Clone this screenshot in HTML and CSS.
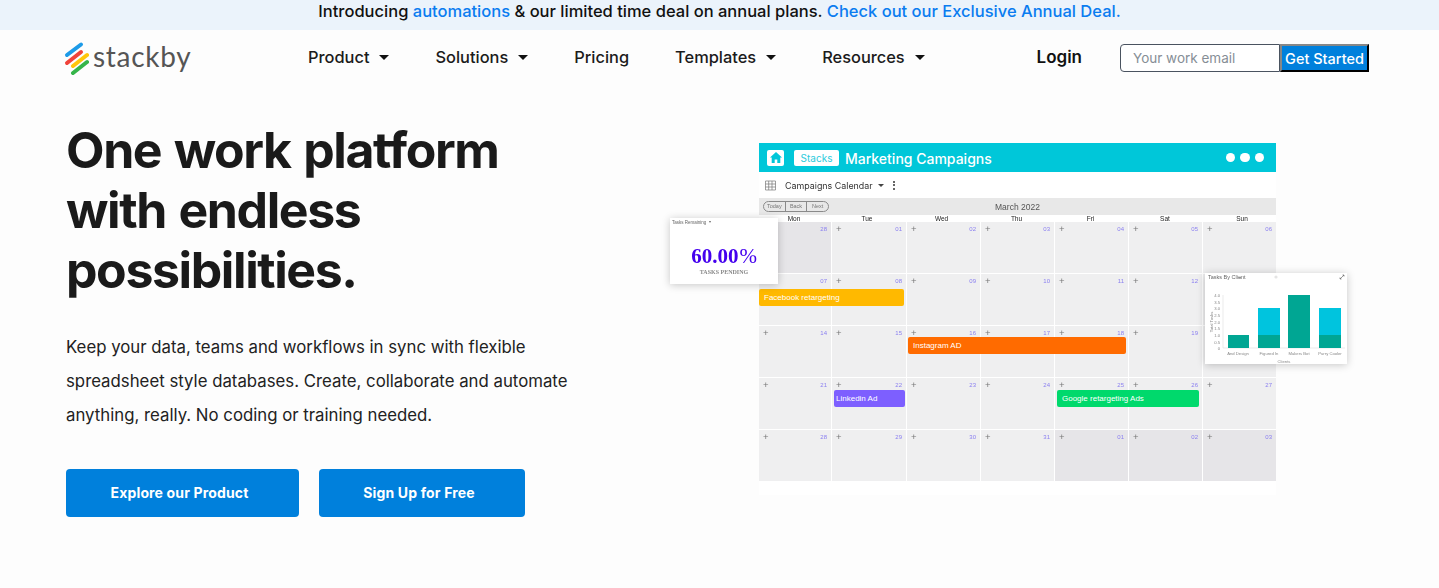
FILE: index.html
```html
<!DOCTYPE html>
<html lang="en">
<head>
	<meta charset="UTF-8">
	<title>Stackby</title>
	<link rel="stylesheet" href="styles.css">
</head>
<body>
	<div class="promo">Introducing <a href="#">automations</a> &amp; our limited time deal on annual plans. <a href="#">Check out our Exclusive Annual Deal.</a></div>

	<header class="nav">
		<a class="logo" href="#">
			<svg width="26" height="36" viewBox="0 0 26 36">
				<path d="M4 15L18 4.500" stroke="#1e9be8"/>
				<path d="M4 23L18 12" stroke="#f0433a"/>
				<path d="M10 26L24 15" stroke="#ffc60b"/>
				<path d="M10 33L24 22" stroke="#35b54a"/>
			</svg>
			<span>stackby</span>
		</a>
		<ul class="menu">
			<li class="caret">Product</li>
			<li class="caret">Solutions</li>
			<li>Pricing</li>
			<li class="caret">Templates</li>
			<li class="caret">Resources</li>
		</ul>
		<a class="login" href="#">Login</a>
		<form class="signup">
			<input type="text" placeholder="Your work email">
			<button type="button">Get Started</button>
		</form>
	</header>

	<main class="hero">
		<section class="intro">
			<h1>One work platform with endless possibilities.</h1>
			<p>Keep your data, teams and workflows in sync with flexible spreadsheet style databases. Create, collaborate and automate anything, really. No coding or training needed.</p>
			<div class="actions">
				<a class="btn btn-wide" href="#">Explore our Product</a>
				<a class="btn" href="#">Sign Up for Free</a>
			</div>
		</section>

		<section class="shot">
			<div class="shot-head">
				<span class="home">
					<svg width="12" height="11" viewBox="0 0 12 11"><path d="M6 0L0 5.500H1.700V11H4.700V7.400H7.300V11H10.300V5.500H12Z" fill="#00c7d9"/></svg>
				</span>
				<span class="stacks">Stacks</span>
				<span class="shot-title">Marketing Campaigns</span>
				<span class="dots"><i></i><i></i><i></i></span>
			</div>
			<div class="shot-tools">
				<svg width="11" height="11" viewBox="0 0 11 11" fill="none" stroke="#777" stroke-width=".7"><path d="M.5 1H10.500M.5 10H10.500M.5 1V10M3.700 1V10M7 1V10M10.500 1V10M.5 4H10.500M.5 7H10.500"/></svg>
				<span class="view-name">Campaigns Calendar</span>
				<span class="view-caret"></span>
				<span class="kebab"><i></i><i></i><i></i></span>
			</div>
			<div class="shot-band">
				<div class="band-btns"><span>Today</span><span>Back</span><span>Next</span></div>
				<span class="month">March 2022</span>
			</div>
			<div class="weekdays">
				<span>Mon</span><span>Tue</span><span>Wed</span><span>Thu</span><span>Fri</span><span>Sat</span><span>Sun</span>
			</div>
			<div class="cal">
				<div class="cell off"><b></b><em>28</em></div>
				<div class="cell"><b>+</b><em>01</em></div>
				<div class="cell"><b>+</b><em>02</em></div>
				<div class="cell"><b>+</b><em>03</em></div>
				<div class="cell"><b>+</b><em>04</em></div>
				<div class="cell"><b>+</b><em>05</em></div>
				<div class="cell"><b>+</b><em>06</em></div>

				<div class="cell"><b></b><em>07</em></div>
				<div class="cell"><b>+</b><em>08</em></div>
				<div class="cell"><b>+</b><em>09</em></div>
				<div class="cell"><b>+</b><em>10</em></div>
				<div class="cell"><b>+</b><em>11</em></div>
				<div class="cell"><b>+</b><em>12</em></div>
				<div class="cell"></div>

				<div class="cell"><b>+</b><em>14</em></div>
				<div class="cell"><b>+</b><em>15</em></div>
				<div class="cell"><b>+</b><em>16</em></div>
				<div class="cell"><b>+</b><em>17</em></div>
				<div class="cell"><b>+</b><em>18</em></div>
				<div class="cell"><b>+</b><em>19</em></div>
				<div class="cell"></div>

				<div class="cell"><b>+</b><em>21</em></div>
				<div class="cell"><b>+</b><em>22</em></div>
				<div class="cell"><b>+</b><em>23</em></div>
				<div class="cell"><b>+</b><em>24</em></div>
				<div class="cell"><b>+</b><em>25</em></div>
				<div class="cell"><b>+</b><em>26</em></div>
				<div class="cell"><b>+</b><em>27</em></div>

				<div class="cell"><b>+</b><em>28</em></div>
				<div class="cell"><b>+</b><em>29</em></div>
				<div class="cell"><b>+</b><em>30</em></div>
				<div class="cell"><b>+</b><em>31</em></div>
				<div class="cell off"><b>+</b><em>01</em></div>
				<div class="cell off"><b>+</b><em>02</em></div>
				<div class="cell off"><b>+</b><em>03</em></div>

				<div class="event ev-facebook">Facebook retargeting</div>
				<div class="event ev-instagram">Instagram AD</div>
				<div class="event ev-linkedin">Linkedin Ad</div>
				<div class="event ev-google">Google retargeting Ads</div>
			</div>
			<div class="shot-foot"></div>

			<div class="float-card card-tasks">
				<div class="card-top">Tasks Remaining <span class="tiny-caret"></span></div>
				<div class="percent">60.00<span>%</span></div>
				<div class="pending">TASKS PENDING</div>
			</div>

			<div class="float-card card-chart">
				<svg width="142" height="91" viewBox="0 0 142 91">
					<text x="3" y="6" class="chart-title">Tasks By Client</text>
					<path d="M34 4.500L36 4.500L35 6Z" fill="#666"/>
					<circle cx="71" cy="4" r="1.600" fill="#e4e4e4"/>
					<path d="M135 6L139 2M137.500 2H139V3.500M135 4.500V6H136.500" stroke="#555" stroke-width=".6" fill="none"/>
					<path d="M18 22V75H140" stroke="#ddd" stroke-width=".6" fill="none"/>
					<rect x="23" y="62" width="21" height="13" fill="#00a693"/>
					<rect x="53" y="35" width="22" height="27" fill="#00c4de"/>
					<rect x="53" y="62" width="22" height="13" fill="#00a693"/>
					<rect x="83" y="22" width="22" height="53" fill="#00a693"/>
					<rect x="114" y="35" width="22" height="27" fill="#00c4de"/>
					<rect x="114" y="62" width="22" height="13" fill="#00a693"/>
					<g class="chart-tick" text-anchor="end">
						<text x="15" y="24">4.0</text>
						<text x="15" y="30.600">3.5</text>
						<text x="15" y="37.300">3.0</text>
						<text x="15" y="44">2.5</text>
						<text x="15" y="50.600">2.0</text>
						<text x="15" y="57.300">1.5</text>
						<text x="15" y="64">1.0</text>
						<text x="15" y="70.600">0.5</text>
						<text x="15" y="77">0</text>
					</g>
					<g class="chart-tick" text-anchor="middle">
						<text x="33" y="82">And Design</text>
						<text x="64" y="82">Figured In</text>
						<text x="94" y="82">Makers Bot</text>
						<text x="125" y="82">Purry Cooler</text>
						<text x="79" y="89.500">Clients</text>
						<text transform="translate(8 49) rotate(-90)">Total Tasks</text>
					</g>
				</svg>
			</div>
		</section>
	</main>
</body>
</html>
```

FILE: styles.css
```css
*{
	margin: 0;
	padding: 0;
	box-sizing: border-box;
}
body{
	background: #fdfdfd;
	color: #1b1b1b;
	font-family: "Inter", "Liberation Sans", sans-serif;
}
a{
	text-decoration: none;
}
ul{
	list-style-type: none;
}

/* top banner */
.promo{
	height: 30px;
	line-height: 23px;
	background: #ebf3fb;
	text-align: center;
	font-size: 16.500px;
	font-weight: 500;
	color: #111;
}
.promo a{
	color: #0a7cf0;
}

/* nav */
.nav{
	display: flex;
	align-items: center;
	height: 56px;
	padding: 0 70px 0 63px;
}
.logo{
	display: flex;
	align-items: center;
	width: 245px;
	color: #555;
	font-family: "Lato", sans-serif;
	font-size: 28px;
	font-weight: 400;
	letter-spacing: .7px;
}
.logo svg{
	fill: none;
	stroke-width: 4;
	stroke-linecap: round;
}
.logo span{
	margin: 0 0 4px 4px;
}
.menu{
	display: flex;
	gap: 46px;
	margin-bottom: 2px;
	font-size: 16.400px;
	font-weight: 500;
}
.caret::after{
	content: "";
	display: inline-block;
	margin-left: 10px;
	vertical-align: 3px;
	border-top: 5px solid #111;
	border-left: 5px solid transparent;
	border-right: 5px solid transparent;
}
.login{
	margin: 0 38px 2px auto;
	color: #111;
	font-size: 17px;
	font-weight: 600;
}
.signup{
	display: flex;
	height: 28px;
}
.signup input{
	width: 160px;
	height: 28px;
	padding-left: 12px;
	border: 1px solid #4a5360;
	border-radius: 4px 0 0 4px;
	background: #fff;
	font-family: inherit;
	font-size: 13.500px;
}
.signup input::placeholder{
	color: #868e96;
}
.signup button{
	width: 89px;
	height: 28px;
	border: 2px outset #333;
	background: #0080dc;
	color: #fff;
	font-family: inherit;
	font-size: 14.500px;
	font-weight: 500;
}

/* hero */
.hero{
	display: flex;
	align-items: flex-start;
	padding: 34px 0 0 66px;
}
.intro{
	width: 520px;
	flex: none;
}
.intro h1{
	width: 460px;
	font-size: 50px;
	font-weight: 700;
	line-height: 60px;
	letter-spacing: -1.400px;
	word-spacing: 2px;
	color: #1a1a1a;
}
.intro p{
	margin-top: 30px;
	font-size: 16.800px;
	line-height: 34px;
	color: #222;
}
.actions{
	display: flex;
	gap: 20px;
	margin-top: 37px;
}
.btn{
	width: 206px;
	height: 48px;
	padding-right: 6px;
	line-height: 48px;
	border-radius: 4px;
	background: #0080dc;
	color: #fff;
	text-align: center;
	font-size: 14px;
	font-weight: 700;
	letter-spacing: .15px;
}
.btn-wide{
	width: 233px;
}

/* product screenshot */
.shot{
	position: relative;
	width: 517px;
	margin: 23px 0 0 173px;
	background: #fff;
	font-family: "Liberation Sans", sans-serif;
	filter: blur(.3px);
}
.shot-head{
	display: flex;
	align-items: center;
	height: 29px;
	padding: 0 12px 0 8px;
	background: #00c7d9;
}
.home{
	display: flex;
	align-items: center;
	justify-content: center;
	width: 17px;
	height: 16px;
	border-radius: 2px;
	background: #fff;
}
.stacks{
	width: 45px;
	height: 16px;
	margin-left: 10px;
	border-radius: 2px;
	background: #fff;
	color: #2ccbdc;
	text-align: center;
	font-family: "Inter", sans-serif;
	font-size: 10px;
	line-height: 16px;
}
.shot-title{
	margin: 2px 0 0 6px;
	color: #fff;
	font-family: "Inter", sans-serif;
	font-size: 14px;
	font-weight: 500;
}
.dots{
	display: flex;
	gap: 5px;
	margin-left: auto;
}
.dots i{
	width: 9.500px;
	height: 9.500px;
	border-radius: 50%;
	background: #fff;
}
.shot-tools{
	display: flex;
	align-items: center;
	height: 26px;
	padding-left: 6px;
}
.view-name{
	margin-left: 9px;
	color: #333;
	font-family: "Inter", sans-serif;
	font-size: 8.900px;
}
.view-caret{
	margin-left: 5px;
	border-top: 3px solid #444;
	border-left: 3px solid transparent;
	border-right: 3px solid transparent;
}
.kebab{
	display: flex;
	flex-direction: column;
	gap: 1.500px;
	margin-left: 9px;
}
.kebab i{
	width: 2px;
	height: 2px;
	border-radius: 50%;
	background: #333;
}
.shot-band{
	display: flex;
	align-items: center;
	height: 17px;
	padding-left: 4px;
	background: #e8e8e8;
}
.band-btns{
	display: flex;
	width: 66px;
	height: 11px;
	border: 1px solid #8a8a8a;
	border-radius: 6px;
	color: #777;
	font-size: 5.500px;
	line-height: 9px;
	text-align: center;
}
.band-btns span{
	flex: 1;
	border-left: 1px solid #8a8a8a;
}
.band-btns span:first-child{
	border-left: 0;
}
.month{
	margin-left: 166px;
	color: #555;
	font-size: 8.500px;
}
.weekdays{
	display: grid;
	grid-template-columns: 70px 74px 73px 75px 71px 76px 76px;
	column-gap: 1px;
	height: 7px;
	color: #222;
	font-size: 6.500px;
	line-height: 7px;
	text-align: center;
}
.cal{
	position: relative;
	display: grid;
	grid-template-columns: 72px 74px 73px 73px 73px 73px 73px;
	grid-auto-rows: 51px;
	gap: 1px;
}
.cell{
	display: flex;
	justify-content: space-between;
	padding: 3px 4px 0 4px;
	background: #efeff0;
	line-height: 8px;
}
.cell.off{
	background: #e6e5e8;
}
.cell b{
	color: #777;
	font-size: 9.500px;
	font-weight: 400;
}
.cell em{
	color: #8a7ff0;
	font-size: 6px;
	font-style: normal;
}
.event{
	position: absolute;
	height: 17px;
	padding-left: 5px;
	border-radius: 2px;
	color: #fff;
	font-size: 8px;
	line-height: 17px;
}
.ev-facebook{
	left: 0;
	top: 67px;
	width: 145px;
	background: #ffb900;
}
.ev-instagram{
	left: 149px;
	top: 115px;
	width: 218px;
	background: #ff6b00;
}
.ev-linkedin{
	left: 75px;
	top: 168px;
	width: 71px;
	padding-left: 2px;
	background: #7d5fff;
}
.ev-google{
	left: 298px;
	top: 168px;
	width: 142px;
	background: #00d96c;
}
.shot-foot{
	height: 14px;
}
.float-card{
	position: absolute;
	background: #fff;
	box-shadow: 0 1px 8px rgba(0,0,0,.22);
}
.card-tasks{
	left: -89px;
	top: 75px;
	width: 108px;
	height: 66px;
	text-align: center;
}
.card-top{
	padding: 2px 0 0 2px;
	color: #666;
	font-size: 4.500px;
	text-align: left;
}
.tiny-caret{
	display: inline-block;
	margin-left: 1px;
	vertical-align: 1px;
	border-top: 2px solid #666;
	border-left: 1.500px solid transparent;
	border-right: 1.500px solid transparent;
}
.percent{
	margin-top: 19px;
	color: #4400ee;
	font-family: "Liberation Serif", serif;
	font-size: 21px;
	font-weight: 700;
	line-height: 24px;
}
.percent span{
	margin-left: 1px;
	font-weight: 400;
}
.pending{
	margin-top: 1px;
	color: #888;
	font-family: "Liberation Serif", serif;
	font-size: 6px;
	font-weight: 700;
}
.card-chart{
	left: 446px;
	top: 130px;
	width: 142px;
	height: 91px;
}
.card-chart svg{
	display: block;
}
.chart-title{
	fill: #666;
	font-size: 5.500px;
}
.chart-tick{
	fill: #888;
	font-size: 4.200px;
}
```
